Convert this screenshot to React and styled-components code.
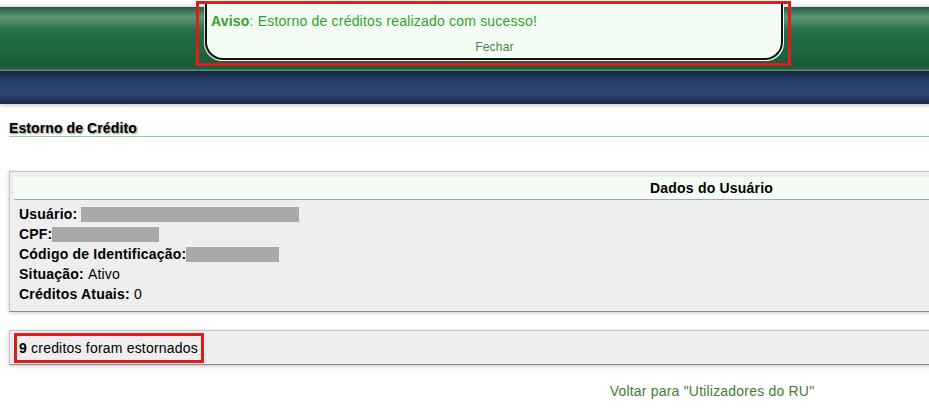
import React from "react";
import styled, { createGlobalStyle } from "styled-components";

const Global = createGlobalStyle`
  html, body { margin: 0; padding: 0; background: #fff; overflow: hidden; }
  body { font-family: "Liberation Sans", Arial, sans-serif; color: #000; letter-spacing: 0.2px; }
`;

const Page = styled.div`
  width: 1424px;
  position: relative;
`;

const TopStrip = styled.div`
  height: 7px;
  background: linear-gradient(to bottom, #ffffff 0, #f4f4f4 5px, #d8d8d8 7px);
`;

const GreenBar = styled.div`
  height: 64px;
  background: linear-gradient(
    to bottom,
    #2b5845 0px,
    #3f7a5a 5px,
    #5b9873 10px,
    #4f8c68 14px,
    #2f7350 21px,
    #226b44 30px,
    #1f653f 44px,
    #1c5b3a 58px,
    #1d5a3a 62px,
    #5e9b73 63px,
    #4f8a66 64px
  );
`;

const BlueBar = styled.div`
  height: 33px;
  background: linear-gradient(
    to bottom,
    #16243a 0px,
    #1f3353 5px,
    #29426d 12px,
    #2b4572 22px,
    #26395f 28px,
    #1a2540 33px
  );
  box-shadow: 0 2px 3px rgba(0, 0, 0, 0.18);
`;

const NoticeFrame = styled.div`
  position: absolute;
  left: 196px;
  top: 1px;
  width: 578px;
  height: 56px;
  border: 3px solid #e21b1b;
  padding: 0 5px 3px 6px;
  box-sizing: content-box;
  display: flex;
`;

const Notice = styled.div`
  flex: 1;
  background: #f3fdf3;
  border: 2px solid #111;
  border-top: none;
  border-radius: 0 0 18px 18px;
  box-shadow: 1px 1px 0 #ffffff, -1px 1px 0 #cfe6d6;
  padding: 9px 4px 0 4px;
  display: flex;
  flex-direction: column;
`;

const NoticeText = styled.div`
  font-size: 14px;
  line-height: 17px;
  color: #33a02c;
`;

const Strong = styled.b`
  font-weight: bold;
`;

const CloseLink = styled.div`
  margin-top: 10px;
  text-align: center;
  font-size: 12px;
  line-height: 14px;
  color: #4e7f4e;
  padding-left: 1px;
`;

const Content = styled.div`
  padding: 0 9px;
`;

const Title = styled.h1`
  margin: 16px 0 0 0;
  font-size: 14px;
  line-height: 16px;
  font-weight: bold;
  letter-spacing: 0.1px;
  text-shadow: 1px 1px 2px #8a8a8a;
  border-bottom: 1px solid #8fd18f;
`;

const Panel = styled.div`
  background: #eeeeee;
  border: 1px solid #c4c4c4;
  border-bottom-color: #8a8a8a;
  box-shadow: 0 1px 4px rgba(0, 0, 0, 0.22);
  margin-top: ${(p) => p.$top}px;
  padding: ${(p) => p.$pad};
`;

const PanelHeader = styled.div`
  height: 22px;
  line-height: 22px;
  background: #f3fdf3;
  border-bottom: 1px solid #a9a9a9;
  text-align: center;
  font-size: 14px;
  font-weight: bold;
`;

const Rows = styled.div`
  padding: 4px 0 0 5px;
`;

const Row = styled.div`
  height: 20px;
  line-height: 20px;
  font-size: 14px;
  display: flex;
  align-items: center;
`;

const Label = styled.b`
  font-weight: bold;
  white-space: pre;
`;

const Redacted = styled.span`
  display: inline-block;
  width: ${(p) => p.$w}px;
  height: 15px;
  background: #a9a9ac;
`;

const Highlight = styled.div`
  display: inline-block;
  border: 3px solid #e21b1b;
  padding: 0 3px 0 2px;
  font-size: 14px;
  line-height: 24px;
`;

const BackLink = styled.div`
  margin-top: 18px;
  text-align: center;
  font-size: 14px;
  line-height: 16px;
  color: #3f7d32;
`;

export default function App() {
  return (
    <>
      <Global />
      <Page>
        <TopStrip />
        <GreenBar />
        <BlueBar />
        <NoticeFrame>
          <Notice>
            <NoticeText>
              <Strong>Aviso</Strong>: Estorno de créditos realizado com sucesso!
            </NoticeText>
            <CloseLink>Fechar</CloseLink>
          </Notice>
        </NoticeFrame>
        <Content>
          <Title>Estorno de Crédito</Title>
          <Panel $top={34} $pad="5px 5px 7px 4px">
            <PanelHeader>Dados do Usuário</PanelHeader>
            <Rows>
              <Row>
                <Label>Usuário: </Label>
                <Redacted $w={218} />
              </Row>
              <Row>
                <Label>CPF:</Label>
                <Redacted $w={107} />
              </Row>
              <Row>
                <Label>Código de Identificação:</Label>
                <Redacted $w={93} />
              </Row>
              <Row>
                <Label>Situação: </Label>Ativo
              </Row>
              <Row>
                <Label>Créditos Atuais: </Label>0
              </Row>
            </Rows>
          </Panel>
          <Panel $top={18} $pad="2px 4px 1px 4px">
            <Highlight>
              <Strong>9</Strong> creditos foram estornados
            </Highlight>
          </Panel>
          <BackLink>Voltar para "Utilizadores do RU"</BackLink>
        </Content>
      </Page>
    </>
  );
}
